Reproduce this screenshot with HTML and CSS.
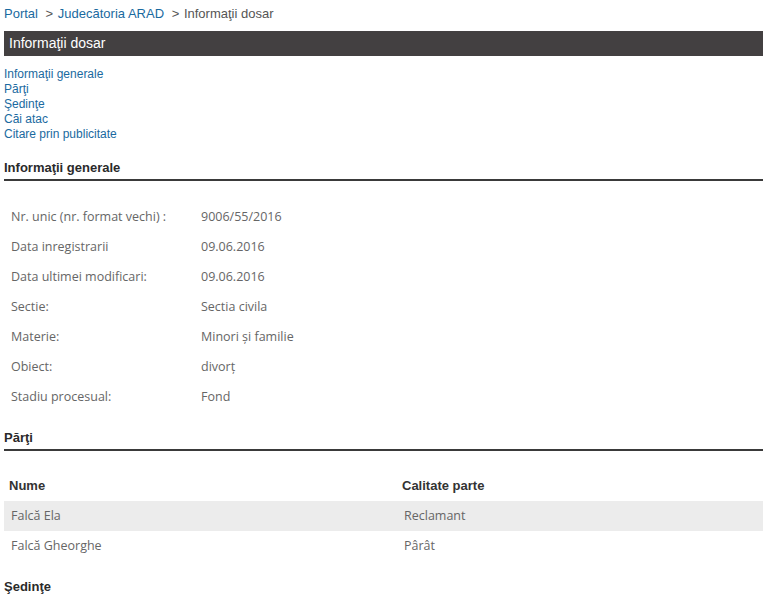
FILE: index.html
```html
<!DOCTYPE html>
<html lang="ro">
<head>
    <meta charset="UTF-8">
    <title>Informaţii dosar</title>
    <link rel="stylesheet" href="styles.css">
</head>
<body>
    <div class="page">
        <div class="breadcrumb">
            <a href="#">Portal</a>
            <span class="sep">&gt;</span>
            <a href="#">Judecătoria ARAD</a>
            <span class="sep">&gt;</span>
            <span>Informaţii dosar</span>
        </div>

        <div class="title-bar">Informaţii dosar</div>

        <ul class="anchors">
            <li><a href="#generale">Informaţii generale</a></li>
            <li><a href="#parti">Părţi</a></li>
            <li><a href="#sedinte">Şedinţe</a></li>
            <li><a href="#cai">Căi atac</a></li>
            <li><a href="#citare">Citare prin publicitate</a></li>
        </ul>

        <h2 class="section-title" id="generale">Informaţii generale</h2>
        <div class="info-table">
            <div class="info-row"><span>Nr. unic (nr. format vechi) :</span><span>9006/55/2016</span></div>
            <div class="info-row"><span>Data inregistrarii</span><span>09.06.2016</span></div>
            <div class="info-row"><span>Data ultimei modificari:</span><span>09.06.2016</span></div>
            <div class="info-row"><span>Sectie:</span><span>Sectia civila</span></div>
            <div class="info-row"><span>Materie:</span><span>Minori și familie</span></div>
            <div class="info-row"><span>Obiect:</span><span>divorț</span></div>
            <div class="info-row"><span>Stadiu procesual:</span><span>Fond</span></div>
        </div>

        <h2 class="section-title" id="parti">Părţi</h2>
        <div class="party-table">
            <div class="party-row party-head"><span>Nume</span><span>Calitate parte</span></div>
            <div class="party-row odd"><span>Falcă Ela</span><span>Reclamant</span></div>
            <div class="party-row"><span>Falcă Gheorghe</span><span>Pârât</span></div>
        </div>

        <h2 class="section-title" id="sedinte">Şedinţe</h2>
    </div>
</body>
</html>
```

FILE: styles.css
```css
body {
    margin: 0;
    padding: 0;
    background-color: #fff;
    font-family: "Liberation Sans", Arial, sans-serif;
    color: #333;
}

.page {
    margin-left: 4px;
}

a {
    color: #1a6aa0;
    text-decoration: none;
}

a:hover {
    text-decoration: underline;
}

.breadcrumb {
    font-size: 13px;
    line-height: 16px;
    padding: 6px 0 9px;
    color: #555;
}

.breadcrumb .sep {
    margin: 0 1px 0 4px;
}

.title-bar {
    background-color: #434041;
    color: #fff;
    font-size: 14px;
    height: 25px;
    line-height: 25px;
    padding-left: 5px;
}

.anchors {
    list-style-type: none;
    margin: 11px 0 0;
    padding: 0;
    font-size: 12px;
    line-height: 15px;
}

.section-title {
    font-size: 13px;
    font-weight: bold;
    line-height: 16px;
    margin: 18px 0 0;
    padding-bottom: 3px;
    border-bottom: 2px solid #3a3a3a;
    color: #2a2a2a;
}

.info-table {
    margin-top: 21px;
    font-family: "Open Sans", "DejaVu Sans", sans-serif;
    font-size: 12.5px;
    color: #666;
}

.info-row {
    display: grid;
    grid-template-columns: 190px 1fr;
    height: 30px;
    line-height: 30px;
    padding-left: 7px;
}

.party-table {
    margin-top: 20px;
    font-family: "Open Sans", "DejaVu Sans", sans-serif;
    font-size: 12.5px;
    color: #666;
}

.party-row {
    display: grid;
    grid-template-columns: 393px 1fr;
    height: 30px;
    line-height: 30px;
    padding-left: 7px;
}

.party-row.odd {
    background-color: #ececec;
}

.party-head {
    font-family: "Liberation Sans", Arial, sans-serif;
    font-size: 13px;
    font-weight: bold;
    color: #333;
    padding-left: 5px;
}
```
